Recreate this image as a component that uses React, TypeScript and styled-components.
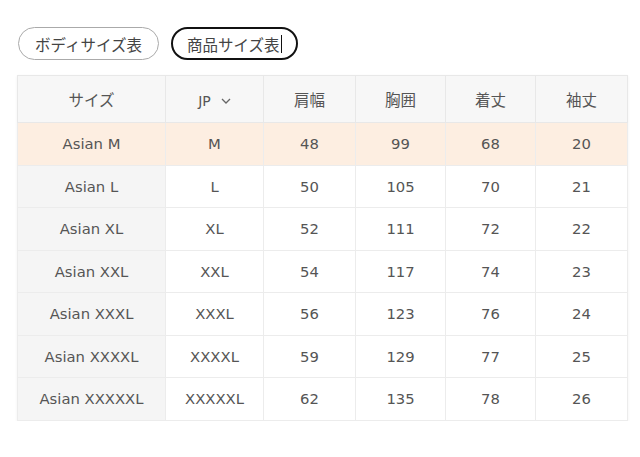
import React from "react";
import styled, { createGlobalStyle } from "styled-components";

const Global = createGlobalStyle`
  html, body { margin: 0; padding: 0; background: #fff; }
  body { font-family: "DejaVu Sans", "Noto Sans CJK JP", sans-serif; color: #555; }
`;

const Page = styled.div`
  padding: 27px 13px 0 17px;
`;

const Tabs = styled.div`
  display: flex;
  gap: 12px;
  margin-left: 1px;
  margin-bottom: 15px;
`;

const Tab = styled.button<{ $active?: boolean }>`
  height: 33px;
  box-sizing: border-box;
  padding: 0 ${(p) => (p.$active ? "14px" : "16px")};
  border-radius: 17px;
  background: #fff;
  border: ${(p) => (p.$active ? "2px solid #111" : "1px solid #aaa")};
  font-family: "Noto Sans CJK JP", sans-serif;
  font-size: 15.5px;
  color: #444;
  display: flex;
  align-items: center;
  cursor: pointer;
`;

const Caret = styled.span`
  display: inline-block;
  width: 1px;
  height: 18px;
  background: #111;
  margin-left: 1px;
`;

const Table = styled.table`
  border-collapse: collapse;
  table-layout: fixed;
  width: 610px;
  box-shadow: 0 1px 3px rgba(0, 0, 0, 0.06);
  font-size: 14.8px;
`;

const Th = styled.th`
  height: 46px;
  background: #f7f7f7;
  border: 1px solid #e8e8e8;
  font-weight: normal;
  color: #555;
  font-family: "Noto Sans CJK JP", sans-serif;
  font-size: 15.5px;
  padding: 0;
`;

const Row = styled.tr<{ $hl?: boolean }>`
  height: 42.5px;
  background: ${(p) => (p.$hl ? "#fdeee1" : "#fff")};
`;

const Td = styled.td<{ $first?: boolean; $hl?: boolean }>`
  border: 1px solid #ececec;
  text-align: center;
  padding: 0;
  color: #555;
  background: ${(p) => (p.$hl ? "#fdeee1" : p.$first ? "#f5f5f5" : "transparent")};
`;

const JP = styled.span`
  display: inline-flex;
  align-items: center;
  gap: 10px;
  font-family: "DejaVu Sans", sans-serif;
  font-size: 14px;
`;

const rows = [
  ["Asian M", "M", "48", "99", "68", "20"],
  ["Asian L", "L", "50", "105", "70", "21"],
  ["Asian XL", "XL", "52", "111", "72", "22"],
  ["Asian XXL", "XXL", "54", "117", "74", "23"],
  ["Asian XXXL", "XXXL", "56", "123", "76", "24"],
  ["Asian XXXXL", "XXXXL", "59", "129", "77", "25"],
  ["Asian XXXXXL", "XXXXXL", "62", "135", "78", "26"],
];

const widths = [148, 98, 92, 90, 90, 92];

export default function App() {
  return (
    <Page>
      <Global />
      <Tabs>
        <Tab>ボディサイズ表</Tab>
        <Tab $active>
          商品サイズ表
          <Caret />
        </Tab>
      </Tabs>
      <Table>
        <colgroup>
          {widths.map((w, i) => (
            <col key={i} style={{ width: w }} />
          ))}
        </colgroup>
        <thead>
          <tr>
            <Th>サイズ</Th>
            <Th>
              <JP>
                JP
                <svg width="10" height="6" viewBox="0 0 10 6" fill="none">
                  <path d="M1 1l4 4 4-4" stroke="#666" strokeWidth="1.3" />
                </svg>
              </JP>
            </Th>
            <Th>肩幅</Th>
            <Th>胸囲</Th>
            <Th>着丈</Th>
            <Th>袖丈</Th>
          </tr>
        </thead>
        <tbody>
          {rows.map((r, i) => (
            <Row key={i} $hl={i === 0}>
              {r.map((c, j) => (
                <Td key={j} $first={j === 0} $hl={i === 0}>
                  {c}
                </Td>
              ))}
            </Row>
          ))}
        </tbody>
      </Table>
    </Page>
  );
}
